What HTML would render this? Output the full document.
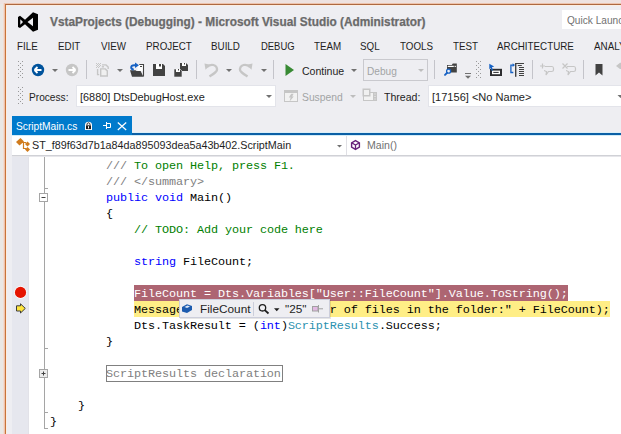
<!DOCTYPE html>
<html><head><meta charset="utf-8">
<style>
html,body{margin:0;padding:0;}
body{width:621px;height:434px;overflow:hidden;position:relative;background:#EAE8E5;font-family:"Liberation Sans",sans-serif;}
.a{position:absolute;}
.t{position:absolute;white-space:pre;line-height:12px;font-size:11.5px;color:#1E1E1E;}
svg.a{left:0;top:0;}
#win{left:5px;top:4px;width:640px;height:450px;background:#EEEEF2;border-left:1px solid #C9743A;border-top:1px solid #AE6840;box-shadow:-1px -1px 0 #EDC3AC, -2px -1px 0 #F2DCD2, inset 1px 1px 0 #FAEEE4;}
#topstrip{left:0;top:0;width:621px;height:4px;background:#EEE2E0;}
.menu{top:40px;transform:scaleX(0.853);transform-origin:0 0;}
.code{position:absolute;white-space:pre;font-family:"Liberation Mono",monospace;font-size:11.8px;letter-spacing:-0.08px;line-height:16px;color:#000;}
.kw{color:#0000FF}.cm{color:#008000}.gr{color:#808080}.ty{color:#2B91AF}
</style></head>
<body>
<div id="topstrip" class="a"></div>
<div id="win" class="a"></div>

<!-- title bar -->
<div class="t" style="left:50px;top:15.5px;font-weight:bold;font-size:11.85px;color:#6A6A6A;-webkit-text-stroke:0.25px #6A6A6A;">VstaProjects (Debugging) - Microsoft Visual Studio (Administrator)</div>
<div class="a" style="left:562px;top:10px;width:70px;height:19px;background:#FFF;"></div>
<div class="t" style="left:567px;top:14px;color:#717171;transform:scaleX(0.88);transform-origin:0 0;">Quick Launch</div>

<!-- menu -->
<div class="t menu" style="left:17px">FILE</div>
<div class="t menu" style="left:58px">EDIT</div>
<div class="t menu" style="left:101px">VIEW</div>
<div class="t menu" style="left:146px">PROJECT</div>
<div class="t menu" style="left:211px">BUILD</div>
<div class="t menu" style="left:261px;transform:scaleX(0.82)">DEBUG</div>
<div class="t menu" style="left:314px">TEAM</div>
<div class="t menu" style="left:360px">SQL</div>
<div class="t menu" style="left:400px">TOOLS</div>
<div class="t menu" style="left:453px">TEST</div>
<div class="t menu" style="left:497px">ARCHITECTURE</div>
<div class="t menu" style="left:594px">ANALYZE</div>

<!-- toolbar texts -->
<div class="t" style="left:302.0px;top:65px;transform:scaleX(0.916);transform-origin:0 0;">Continue</div>
<div class="a" style="left:363px;top:59px;width:65px;height:22px;border:1px solid #C9C9CE;box-sizing:border-box;"></div>
<div class="t" style="left:367.0px;top:65px;color:#A2A4A5;transform:scaleX(0.880);transform-origin:0 0;">Debug</div>

<div class="t" style="left:29.0px;top:91px;transform:scaleX(0.882);transform-origin:0 0;">Process:</div>
<div class="a" style="left:76px;top:85px;width:200px;height:22px;background:#FFF;border:1px solid #E3E4EA;box-sizing:border-box;"></div>
<div class="t" style="left:80.0px;top:91px;transform:scaleX(0.947);transform-origin:0 0;">[6880] DtsDebugHost.exe</div>
<div class="t" style="left:302.4px;top:91px;color:#A2A4A5;transform:scaleX(0.897);transform-origin:0 0;">Suspend</div>
<div class="t" style="left:384.0px;top:91px;transform:scaleX(0.918);transform-origin:0 0;">Thread:</div>
<div class="a" style="left:428px;top:85px;width:200px;height:22px;background:#FFF;border:1px solid #E3E4EA;box-sizing:border-box;"></div>
<div class="t" style="left:431.6px;top:91px;transform:scaleX(0.960);transform-origin:0 0;">[17156] &lt;No Name&gt;</div>

<!-- tab -->
<div class="a" style="left:12px;top:132px;width:610px;height:1px;background:#DCEFF7;"></div>
<div class="a" style="left:12px;top:133px;width:610px;height:2px;background:#0B5FA5;"></div>
<div class="a" style="left:12px;top:116px;width:120px;height:19px;background:#007ACC;"></div>
<div class="t" style="left:16.0px;top:120px;color:#FFF;transform:scaleX(0.888);transform-origin:0 0;">ScriptMain.cs</div>

<!-- nav bar -->
<div class="a" style="left:12px;top:135px;width:610px;height:20px;background:#FFF;border-top:1px solid #D2ECF8;box-sizing:border-box;"></div>
<div class="a" style="left:12px;top:155px;width:610px;height:1px;background:#D0D1D6;"></div>
<div class="t" style="left:32.0px;top:139px;transform:scaleX(0.936);transform-origin:0 0;">ST_f89f63d7b1a84da895093dea5a43b402.ScriptMain</div>
<div class="a" style="left:346px;top:136px;width:1px;height:19px;background:#E0E0E5;"></div>
<div class="t" style="left:367.0px;top:139px;color:#717171;transform:scaleX(0.919);transform-origin:0 0;">Main()</div>

<!-- top icons -->
<svg class="a" width="621" height="160" viewBox="0 0 621 160">
  <!-- VS logo -->
  <path fill="#000" fill-rule="evenodd" d="M18,17 L20,15.8 L25,19.8 L33,12.3 L38,14.2 L38,29.8 L33,31.8 L25,24.2 L20,28 L18,27 Z M20.3,19.3 L23,22 L20.3,24.7 Z M27.5,22 L33,17.8 L33,26.2 Z"/>
  <!-- grips -->
  <g fill="#999">
    <rect x="18" y="61" width="1" height="1"/><rect x="22" y="61" width="1" height="1"/><rect x="20" y="63" width="1" height="1"/>
    <rect x="18" y="65" width="1" height="1"/><rect x="22" y="65" width="1" height="1"/><rect x="20" y="67" width="1" height="1"/>
    <rect x="18" y="69" width="1" height="1"/><rect x="22" y="69" width="1" height="1"/><rect x="20" y="71" width="1" height="1"/>
    <rect x="18" y="73" width="1" height="1"/><rect x="22" y="73" width="1" height="1"/><rect x="20" y="75" width="1" height="1"/>
    <rect x="18" y="77" width="1" height="1"/><rect x="22" y="77" width="1" height="1"/>
    <rect x="18" y="87" width="1" height="1"/><rect x="22" y="87" width="1" height="1"/><rect x="20" y="89" width="1" height="1"/>
    <rect x="18" y="91" width="1" height="1"/><rect x="22" y="91" width="1" height="1"/><rect x="20" y="93" width="1" height="1"/>
    <rect x="18" y="95" width="1" height="1"/><rect x="22" y="95" width="1" height="1"/><rect x="20" y="97" width="1" height="1"/>
    <rect x="18" y="99" width="1" height="1"/><rect x="22" y="99" width="1" height="1"/><rect x="20" y="101" width="1" height="1"/>
    <rect x="18" y="103" width="1" height="1"/><rect x="22" y="103" width="1" height="1"/>
    <rect x="476" y="61" width="1" height="1"/><rect x="480" y="61" width="1" height="1"/><rect x="478" y="63" width="1" height="1"/>
    <rect x="476" y="65" width="1" height="1"/><rect x="480" y="65" width="1" height="1"/><rect x="478" y="67" width="1" height="1"/>
    <rect x="476" y="69" width="1" height="1"/><rect x="480" y="69" width="1" height="1"/><rect x="478" y="71" width="1" height="1"/>
    <rect x="476" y="73" width="1" height="1"/><rect x="480" y="73" width="1" height="1"/><rect x="478" y="75" width="1" height="1"/>
    <rect x="476" y="77" width="1" height="1"/><rect x="480" y="77" width="1" height="1"/>
  </g>
  <!-- back / forward -->
  <circle cx="38" cy="70" r="6.2" fill="#00539C"/>
  <path d="M34.5,70 L37.5,67 M34.5,70 L37.5,73 M34.8,70 L41.5,70" stroke="#FFF" stroke-width="1.8" fill="none"/>
  <circle cx="72" cy="70" r="6.2" fill="#C6C6C6"/>
  <path d="M75.5,70 L72.5,67 M75.5,70 L72.5,73 M75.2,70 L68.5,70" stroke="#FFF" stroke-width="1.8" fill="none"/>
  <!-- dropdown triangles -->
  <g fill="#717171">
    <path d="M52,69 L58,69 L55,72 Z"/>
    <path d="M117,69 L123,69 L120,72 Z"/>
    <path d="M226,69 L232,69 L229,72 Z"/>
    <path d="M261,69 L267,69 L264,72 Z"/>
    <path d="M351,69 L357,69 L354,72 Z"/>
    <path d="M418,69 L424,69 L421,72 Z" fill="#BDBDBD"/>
    <path d="M465,75.8 L471,75.8 L468,78.8 Z"/>
    <path d="M266,95 L272,95 L269,98 Z"/>
    <path d="M350,95 L356,95 L353,98 Z" fill="#BDBDBD"/>
    <path d="M617.5,95 L623.5,95 L620.5,98 Z"/>
    <path d="M337,145 L342,145 L339.5,147.5 Z"/>
  </g>
  <rect x="465" y="73" width="6" height="1" fill="#717171"/>
  <!-- separators -->
  <g fill="#C4C4CA">
    <rect x="86" y="60" width="1" height="19"/>
    <rect x="196" y="60" width="1" height="19"/>
    <rect x="273" y="60" width="1" height="19"/>
    <rect x="434" y="60" width="1" height="19"/>
    <rect x="532" y="60" width="1" height="19"/>
    <rect x="583" y="60" width="1" height="19"/>
  </g>
  <!-- new project (disabled) -->
  <g fill="none" stroke="#C6C6C6" stroke-width="1.4">
    <path d="M97.6,69 L97.6,74.6 L99.2,74.6"/>
    <path d="M100.7,68.9 L105.3,68.9 L107.3,70.9 L107.3,76 L100.7,76 Z" fill="#F0F0F0"/>
    <path d="M102,64.9 L106,64.9 L108.2,67 L108.2,69"/>
    <path d="M101.8,66.8 L104,66.8"/>
  </g>
  <g fill="#C6C6C6"><rect x="96" y="63" width="1" height="1"/><rect x="98" y="63" width="1" height="1"/><rect x="100" y="63" width="1" height="1"/><rect x="97" y="64" width="1" height="1"/><rect x="99" y="64" width="1" height="1"/><rect x="96" y="65" width="1" height="1"/><rect x="98" y="65" width="1" height="1"/><rect x="100" y="65" width="1" height="1"/><rect x="97" y="66" width="1" height="1"/><rect x="99" y="66" width="1" height="1"/><rect x="96" y="67" width="1" height="1"/><rect x="98" y="67" width="1" height="1"/></g>
  <!-- open -->
  <rect x="137.5" y="65" width="6" height="6" fill="#FFF"/>
  <path d="M139.3,64.5 L143.5,64.5 L143.5,76.5" fill="none" stroke="#424242" stroke-width="1.1"/>
  <rect x="140" y="66" width="2" height="1" fill="#424242"/>
  <path d="M130,70.2 L135.5,70.2 L136.5,71 L140.6,71 L143.4,76.7 L132,76.7 Z" fill="#424242"/>
  <path d="M133.8,69.6 C130.2,69 130.2,65.4 134.3,65.3 L136,65.3" fill="none" stroke="#1762C4" stroke-width="1.9"/>
  <path d="M135,62.6 L139,65.3 L135,68 Z" fill="#1762C4"/>
  <!-- save -->
  <path d="M153,64 L163,64 L165,66 L165,76 L153,76 Z" fill="#424242"/>
  <rect x="156" y="64" width="6" height="5" fill="#FFF"/>
  <rect x="159" y="64" width="2" height="2.5" fill="#424242"/>
  <!-- save all -->
  <path d="M180,63 L186,63 L188,65 L188,71 L180,71 Z" fill="#424242"/>
  <rect x="182" y="63" width="4" height="3" fill="#FFF"/><rect x="184" y="63" width="1" height="1.5" fill="#424242"/>
  <path d="M174,69 L180,69 L182,71 L182,77 L174,77 Z" fill="#424242" stroke="#EEEEF2" stroke-width="0.6"/>
  <rect x="176" y="69" width="4" height="3" fill="#FFF"/><rect x="178" y="69" width="1" height="1.5" fill="#424242"/>
  <!-- undo / redo -->
  <path d="M207,67 C209,65 211.5,64.5 213.5,65 C216.5,65.8 217.5,68.5 216.8,70.5 C216,72.5 212.5,74.5 209.5,76.5" fill="none" stroke="#C6C6C6" stroke-width="2.3"/>
  <path d="M204.5,63.5 L210.5,64.8 L205.5,69.8 Z" fill="#C6C6C6"/>
  <path d="M250,67 C248,65 245.5,64.5 243.5,65 C240.5,65.8 239.5,68.5 240.2,70.5 C241,72.5 244.5,74.5 247.5,76.5" fill="none" stroke="#C6C6C6" stroke-width="2.3"/>
  <path d="M252.5,63.5 L246.5,64.8 L251.5,69.8 Z" fill="#C6C6C6"/>
  <!-- continue -->
  <path d="M285.5,64 L294,70 L285.5,76 Z" fill="#388A34"/>
  <!-- find in files -->
  <path d="M447,65 L451.8,65 L452.8,63.5 L456.8,63.5 L456.8,72.5 L447,72.5 Z" fill="#424242"/>
  <path d="M448.3,66.4 L455.3,66.4" stroke="#FFF" stroke-width="1.3" stroke-linecap="round"/>
  <circle cx="454.3" cy="66" r="0.8" fill="#424242"/>
  <circle cx="448.6" cy="71.2" r="2" fill="#EEEEF2" stroke="#1762C4" stroke-width="1.3"/>
  <path d="M447,72.9 L445,74.9" stroke="#1762C4" stroke-width="1.9" stroke-linecap="round"/>
  <!-- step icon -->
  <rect x="490" y="68.8" width="12" height="7.2" fill="#2D2D30"/>
  <rect x="492" y="70.6" width="8" height="3.6" fill="#FFF"/>
  <rect x="493.3" y="71.9" width="5.4" height="1" fill="#2D2D30"/>
  <path d="M489.3,63.8 L494.2,66.6 L491.9,67.2 L493,70.2 L491.6,70.7 L490.5,67.7 L489.3,69.4 Z" fill="#1762C4"/>
  <!-- next statement icon -->
  <path d="M513.3,72.5 L510.9,72.5 L510.9,65.1 L513,65.1" fill="none" stroke="#1762C4" stroke-width="1.3"/>
  <path d="M512.6,63.3 L515,65.1 L512.6,66.9 Z" fill="#1762C4"/>
  <rect x="515" y="63" width="1.4" height="13.8" fill="#424242"/>
  <g fill="#424242"><rect x="515" y="63" width="9" height="1"/><rect x="517.8" y="65" width="4" height="1"/><rect x="519" y="67" width="5" height="1"/><rect x="519" y="69" width="5" height="1"/><rect x="519" y="71" width="5" height="1"/><rect x="519" y="73" width="5" height="1"/><rect x="519" y="75" width="5" height="1"/></g>
  <!-- comment icons -->
  <g fill="none" stroke="#C6C6C6" stroke-width="1.2">
    <path d="M545,66.5 L552,66.5 C553.5,66.5 553.5,67.5 553.5,68.5 L553.5,70 C553.5,71 552.5,71.5 551.5,71.5 L548.5,71.5 L546,75 L546.5,71.5 C545,71.5 544.5,71 544.5,70"/>
    <path d="M540,66 L545,66 M542.5,63.5 L542.5,68.5"/>
    <path d="M567,66.5 L574,66.5 C575.5,66.5 575.5,67.5 575.5,68.5 L575.5,70 C575.5,71 574.5,71.5 573.5,71.5 L570.5,71.5 L568,75 L568.5,71.5 C567,71.5 566.5,71 566.5,70"/>
    <path d="M562.5,63.5 L567.5,68.5 M567.5,63.5 L562.5,68.5"/>
  </g>
  <!-- bookmark -->
  <path d="M595.5,64 L602.5,64 L602.5,75.5 L599,72.5 L595.5,75.5 Z" fill="#424242"/>
  <path d="M616,65.9 L620,62.8 L621,62.8 L621,64.8 L622,64.8 L622,67 L621,67 L621,69 L620,69 Z" fill="#C6C6C6"/>
  <!-- suspend icon -->
  <rect x="284.5" y="90.5" width="13" height="11" fill="#F2F2F2" stroke="#C6C6C6"/>
  <rect x="284" y="90" width="14" height="3" fill="#C6C6C6"/>
  <path d="M291.2,93.8 L293.6,93.8 L292.2,96.4 L293.8,96.4 L289.6,101.6 L290.6,97.6 L288.8,97.6 Z" fill="#C6C6C6"/>
  <!-- thread icon -->
  <rect x="363.5" y="92.5" width="13" height="8" fill="#F2F2F2" stroke="#C6C6C6"/>
  <rect x="373" y="92" width="4" height="9" fill="#C6C6C6"/>
  <rect x="374.5" y="93.5" width="1" height="1" fill="#F2F2F2"/><rect x="374.5" y="96" width="1" height="1" fill="#F2F2F2"/><rect x="374.5" y="98.5" width="1" height="1" fill="#F2F2F2"/>
  <rect x="362.5" y="88.5" width="8" height="8" fill="#C6C6C6"/>
  <rect x="364" y="90" width="5" height="5" fill="#F0F0F0"/>
  <!-- tab icons -->
  <path d="M85,130 L85,124.8 C85,120.6 92,120.6 92,124.8 L92,130 Z" fill="#FFF"/>
  <rect x="86" y="125.3" width="5" height="3.8" fill="#1E1E1E"/>
  <path d="M87,125 L87,124.6 C87,122.2 90,122.2 90,124.6 L90,125" stroke="#1E1E1E" stroke-width="1" fill="none"/>
  <rect x="88" y="126.2" width="1" height="2.2" fill="#FFF"/>
  <path d="M103,125.5 L106.5,125.5 M106.5,122 L106.5,129 M106.5,123.5 L110.5,123.5 L110.5,127.5 L106.5,127.5" stroke="#FFF" stroke-width="1" fill="none"/>
  <path d="M117.8,122.5 L126.2,130 M126.2,122.5 L117.8,130" stroke="#FFF" stroke-width="1.2"/>
  <!-- class icon -->
  <g fill="#D07B1D">
    <path d="M16,142 L20.5,138 L24,141.5 L19.5,145.5 Z"/>
    <path d="M25,144 L27.5,141.5 L30,144 L27.5,146.5 Z"/>
    <path d="M25,149.5 L27.5,147 L30,149.5 L27.5,152 Z"/>
  </g>
  <path d="M21,142.5 L26,142.5 M23.5,142.5 L23.5,148.5 L26,148.5" stroke="#D07B1D" stroke-width="1.2" fill="none"/>
  <!-- method icon -->
  <path d="M355.5,140.6 L359.4,142.8 L359.4,147.2 L355.5,149.4 L351.6,147.2 L351.6,142.8 Z" fill="none" stroke="#68217A" stroke-width="1.4"/>
  <path d="M352,143 L355.5,145 L359,143 M355.5,145 L355.5,149" fill="none" stroke="#68217A" stroke-width="1.3"/>
</svg>

<!-- editor -->
<div class="a" style="left:12px;top:156px;width:610px;height:280px;background:#FFF;border-top:1px solid #E6E6EA;box-sizing:border-box;"></div>
<div class="a" style="left:12px;top:157px;width:17px;height:280px;background:#E6E7EE;border-right:1px solid #E2E2E8;box-sizing:border-box;"></div>

<div class="a" style="left:134px;top:285px;width:434px;height:16px;background:#AD6572;"></div>
<div class="a" style="left:134px;top:301px;width:476px;height:16px;background:#FFEE86;"></div>

<div class="code" style="left:49.9px;top:158px;"><span class="gr">        ///</span><span class="cm"> To open Help, press F1.</span>
<span class="gr">        /// &lt;/summary&gt;</span>
        <span class="kw">public</span> <span class="kw">void</span> Main()
        {
            <span class="cm">// TODO: Add your code here</span>

            <span class="kw">string</span> FileCount;

            <span style="color:#FFF">FileCount = Dts.Variables["User::FileCount"].Value.ToString();</span>
            MessageBox.Show("Total number of files in the folder:" + FileCount);
            Dts.TaskResult = (<span class="kw">int</span>)<span class="ty">ScriptResults</span>.Success;
        }

        <span class="gr">ScriptResults declaration</span>

    }
}</div>
<div class="a" style="left:106px;top:365px;width:177px;height:17px;border:1px solid #808080;box-sizing:border-box;"></div>

<svg class="a" width="621" height="434" viewBox="0 0 621 434">
  <!-- outlining -->
  <g fill="#A5A5A5">
    <rect x="44" y="157" width="1" height="36"/>
    <rect x="44" y="188" width="4" height="1"/>
    <rect x="44" y="202" width="1" height="146"/>
    <rect x="44" y="348" width="4" height="1"/>
    <rect x="44" y="348" width="1" height="21"/>
    <rect x="44" y="378" width="1" height="51"/>
    <rect x="44" y="412" width="4" height="1"/>
    <rect x="44" y="428" width="4" height="1"/>
  </g>
  <rect x="39.5" y="193.5" width="8" height="8" fill="#FFF" stroke="#A5A5A5"/>
  <rect x="41.5" y="197" width="4" height="1" fill="#424242"/>
  <rect x="39.5" y="369.5" width="8" height="8" fill="#ECECEC" stroke="#A5A5A5"/>
  <rect x="41.5" y="373" width="4" height="1" fill="#424242"/>
  <rect x="43" y="371.5" width="1" height="4" fill="#424242"/>
  <!-- breakpoint & arrow -->
  <circle cx="20.5" cy="292.4" r="6.3" fill="#FFF"/>
  <circle cx="20.5" cy="292.4" r="5.6" fill="#E51400"/>
  <path d="M16.5,305.8 L20.5,305.8 L20.5,303.8 L25.3,308.4 L20.5,313 L20.5,311 L16.5,311 Z" fill="#FFE53D" stroke="#3C3C3C" stroke-width="1"/>
</svg>

<!-- tooltip -->
<div class="a" style="left:179px;top:299px;width:151px;height:19px;background:#EEEEF2;border:1px solid #CCCEDB;box-sizing:border-box;box-shadow:1px 1px 0 rgba(0,0,0,0.1);"></div>
<div class="t" style="left:200px;top:302.5px;font-size:11.8px;">FileCount</div>
<div class="t" style="left:285px;top:302.5px;font-size:11.8px;">"25"</div>
<svg class="a" width="621" height="434" viewBox="0 0 621 434">
  <path d="M182,307 L187,304.2 L192,306 L192,310 L187,313 L182,311.5 Z" fill="#1C5BAE"/>
  <path d="M184.5,307 L187.5,305.5 L190,306.5 L187,308 Z" fill="#DDE8F7"/>
  <rect x="253" y="302" width="1" height="14" fill="#CCCEDB"/>
  <circle cx="262.5" cy="307.8" r="3.2" fill="none" stroke="#1E1E1E" stroke-width="1.3"/>
  <path d="M264.8,310.2 L268.5,313.5" stroke="#1E1E1E" stroke-width="1.8"/>
  <path d="M274,308.3 L279.5,308.3 L276.75,311.2 Z" fill="#1E1E1E"/>
  <rect x="312.5" y="306.5" width="5.5" height="4.5" fill="#E2B8E2" stroke="#A0A0A0" stroke-width="1"/>
  <path d="M318.5,305 L318.5,312.5 M318.5,308.8 L323,308.8" stroke="#A0A0A0" stroke-width="1"/>
</svg>

</body></html>
